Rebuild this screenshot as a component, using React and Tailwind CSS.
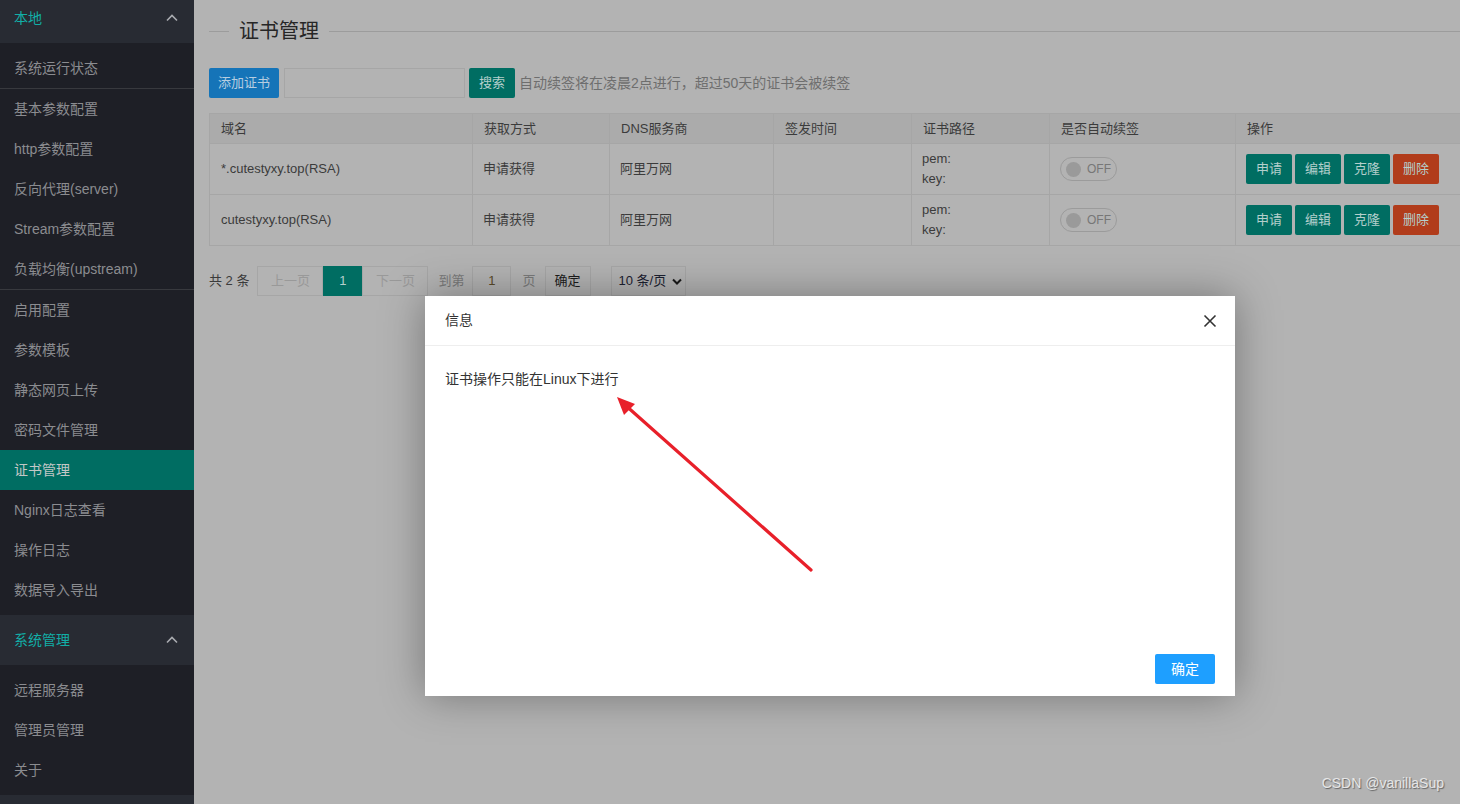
import React from 'react';

const groupOne = ['基本参数配置', 'http参数配置', '反向代理(server)', 'Stream参数配置', '负载均衡(upstream)'];
const groupTwo = ['启用配置', '参数模板', '静态网页上传', '密码文件管理', '证书管理', 'Nginx日志查看', '操作日志', '数据导入导出'];
const groupSys = ['远程服务器', '管理员管理', '关于'];

const rows = [
  { domain: '*.cutestyxy.top(RSA)', way: '申请获得', dns: '阿里万网' },
  { domain: 'cutestyxy.top(RSA)', way: '申请获得', dns: '阿里万网' },
];

const cols = 'grid grid-cols-[263px_137px_164px_138px_138px_186px_240px]';

function Chevron() {
  return (
    <svg width="12" height="8" viewBox="0 0 12 8" fill="none">
      <path d="M1 6.5 L6 1.5 L11 6.5" stroke="#a9abb0" strokeWidth="1.6" />
    </svg>
  );
}

function NavItem({ label, active }) {
  return (
    <div className={`h-10 flex items-center pl-[14px] text-[14px] ${active ? 'bg-[#006d62] text-[#c3c7c6]' : 'text-[#8b8c90]'}`}>
      {label}
    </div>
  );
}

function NavHeader({ label, top }) {
  return (
    <div className={`h-[50px] ${top ? '-mt-[7px]' : ''} bg-[#282b33] flex items-center justify-between pl-[14px] pr-[16px]`}>
      <span className="text-[14px] text-[#12aea7]">{label}</span>
      <Chevron />
    </div>
  );
}

function Sidebar() {
  return (
    <div className="w-[194px] shrink-0 h-[804px] overflow-hidden bg-[#1e1f26]">
      <NavHeader label="本地" top />
      <div className="pt-[5px] border-b border-[#38393e]">
        <NavItem label="系统运行状态" />
      </div>
      <div className="border-b border-[#38393e]">
        {groupOne.map((l) => <NavItem key={l} label={l} />)}
      </div>
      <div className="pb-[5px]">
        {groupTwo.map((l) => <NavItem key={l} label={l} active={l === '证书管理'} />)}
      </div>
      <NavHeader label="系统管理" />
      <div className="py-[5px]">
        {groupSys.map((l) => <NavItem key={l} label={l} />)}
      </div>
      <div className="h-[50px] bg-[#282b33]" />
    </div>
  );
}

function Btn({ children, color }) {
  return (
    <div className={`w-[46px] h-[30px] rounded-[2px] flex items-center justify-center text-[13px] text-[#b4cfcc] ${color}`}>
      {children}
    </div>
  );
}

function Switch() {
  return (
    <div className="w-[57px] h-[24px] rounded-full border border-[#9b9b9b] flex items-center pl-[5px] gap-[6px]">
      <div className="w-[15px] h-[15px] rounded-full bg-[#9a9a9a]" />
      <span className="text-[12px] text-[#777]">OFF</span>
    </div>
  );
}

function Table() {
  const head = ['域名', '获取方式', 'DNS服务商', '签发时间', '证书路径', '是否自动续签', '操作'];
  return (
    <div className="mt-[15px] w-[1266px] border-t border-l border-[#a6a6a6] text-[13px] text-[#3b3b3b]">
      <div className={`${cols} h-[30px] bg-[#ababab]`}>
        {head.map((h) => (
          <div key={h} className="border-r border-b border-[#a6a6a6] flex items-center pl-[11px]">{h}</div>
        ))}
      </div>
      {rows.map((r) => (
        <div key={r.domain} className={`${cols} h-[51px]`}>
          <div className="border-r border-b border-[#a6a6a6] flex items-center pl-[11px]">{r.domain}</div>
          <div className="border-r border-b border-[#a6a6a6] flex items-center pl-[10px]">{r.way}</div>
          <div className="border-r border-b border-[#a6a6a6] flex items-center pl-[10px]">{r.dns}</div>
          <div className="border-r border-b border-[#a6a6a6]" />
          <div className="border-r border-b border-[#a6a6a6] flex flex-col justify-center pl-[10px] leading-[20px]">
            <span>pem:</span>
            <span>key:</span>
          </div>
          <div className="border-r border-b border-[#a6a6a6] flex items-center pl-[10px]">
            <Switch />
          </div>
          <div className="border-r border-b border-[#a6a6a6] flex items-center pl-[10px] gap-[3px]">
            <Btn color="bg-[#006d62]">申请</Btn>
            <Btn color="bg-[#006d62]">编辑</Btn>
            <Btn color="bg-[#006d62]">克隆</Btn>
            <Btn color="bg-[#b13c1b]">删除</Btn>
          </div>
        </div>
      ))}
    </div>
  );
}

function Pager() {
  return (
    <div className="mt-[20px] flex items-center h-[30px] text-[13px] text-[#3b3b3b]">
      <span className="mr-[8px]">共 2 条</span>
      <div className="h-[30px] w-[66px] border border-[#a6a6a6] flex items-center justify-center text-[#999]">上一页</div>
      <div className="h-[30px] w-[39px] bg-[#006d62] flex items-center justify-center text-[#b4cfcc]">1</div>
      <div className="h-[30px] w-[66px] border border-[#a6a6a6] flex items-center justify-center text-[#999]">下一页</div>
      <span className="ml-[10px] mr-[8px] text-[#7a7a7a]">到第</span>
      <div className="h-[30px] w-[39px] border border-[#a6a6a6] flex items-center justify-center text-[#5a4a2a]">1</div>
      <span className="ml-[11px] mr-[9px] text-[#7a7a7a]">页</span>
      <div className="h-[30px] w-[46px] border border-[#a6a6a6] flex items-center justify-center text-[#1c1c1c]">确定</div>
      <div className="ml-[20px] h-[30px] w-[75px] border border-[#a6a6a6] flex items-center pl-[7px] gap-[6px] text-[#1c2030]">
        <span>10 条/页</span>
        <svg width="10" height="7" viewBox="0 0 10 7"><path d="M1 1.5 L5 5.5 L9 1.5" stroke="#1a1a1a" strokeWidth="2" fill="none" /></svg>
      </div>
    </div>
  );
}

function Modal() {
  return (
    <div className="absolute left-[425px] top-[296px] w-[810px] h-[400px] bg-white shadow-[0_0_40px_rgba(0,0,0,0.35)] flex flex-col">
      <div className="h-[50px] border-b border-[#eeeeee] flex items-center justify-between pl-[20px] pr-[18px]">
        <span className="text-[14px] text-[#333]">信息</span>
        <svg width="14" height="14" viewBox="0 0 14 14"><path d="M1.5 1.5 L12.5 12.5 M12.5 1.5 L1.5 12.5" stroke="#333" strokeWidth="1.6" /></svg>
      </div>
      <div className="flex-1 relative pl-[20px] pt-[23px] text-[14px] text-[#333]">
        证书操作只能在Linux下进行
        <svg className="absolute left-[185px] top-[44px]" width="210" height="190" viewBox="0 0 210 190">
          <line x1="201" y1="180" x2="14" y2="14" stroke="#e8202a" strokeWidth="3.2" strokeLinecap="round" />
          <polygon points="7,7 25,14 14,25" fill="#e8202a" />
        </svg>
      </div>
      <div className="h-[60px] shrink-0 flex items-start justify-end pr-[20px] pt-[18px]">
        <div className="w-[60px] h-[30px] rounded-[2px] bg-[#1e9fff] text-white text-[14px] flex items-center justify-center">确定</div>
      </div>
    </div>
  );
}

export default function App() {
  return (
    <div className="relative w-[1460px] h-[804px] overflow-hidden flex" style={{ fontFamily: '"Liberation Sans", "Noto Sans CJK SC", sans-serif' }}>
      <Sidebar />
      <div className="flex-1 bg-[#b3b3b3] pl-[15px] pt-[18px] overflow-hidden">
        <div className="flex items-center h-[26px]">
          <div className="w-[20px] h-px bg-[#9c9c9c]" />
          <span className="px-[10px] text-[20px] text-[#262626]">证书管理</span>
          <div className="flex-1 h-px bg-[#9c9c9c]" />
        </div>
        <div className="mt-[24px] flex items-center gap-[4px] h-[30px]">
          <div className="h-[30px] w-[70px] rounded-[2px] bg-[#1574b8] text-[#b6cde0] text-[13px] flex items-center justify-center">添加证书</div>
          <div className="h-[30px] w-[181px] ml-[1px] border border-[#a6a6a6]" />
          <div className="h-[30px] w-[46px] rounded-[2px] bg-[#006d62] text-[#b4cfcc] text-[13px] flex items-center justify-center">搜索</div>
          <span className="text-[14px] text-[#6e6e6e]">自动续签将在凌晨2点进行，超过50天的证书会被续签</span>
        </div>
        <Table />
        <Pager />
      </div>
      <Modal />
      <div className="absolute right-[16px] bottom-[10px] text-[14px] text-[#e6e6e6] [text-shadow:1px_1px_1px_rgba(0,0,0,0.45)]">CSDN @vanillaSup</div>
    </div>
  );
}
